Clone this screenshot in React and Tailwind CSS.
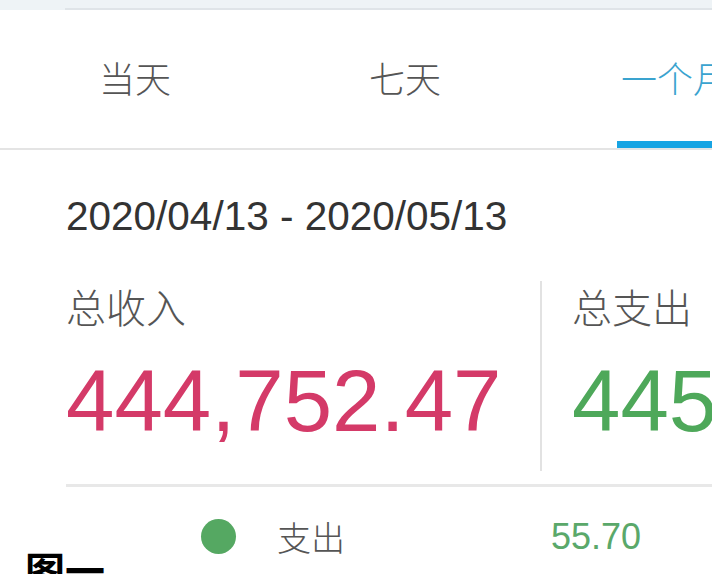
import React from "react";

const cjk = { fontFamily: '"Noto Sans CJK SC", "Noto Sans", sans-serif' };
const num = { fontFamily: '"Liberation Sans", Arial, sans-serif' };

export default function App() {
  return (
    <div className="relative w-[712px] h-[574px] overflow-hidden bg-white">
      {/* top strip */}
      <div className="h-[10px] bg-[#eef3f6] flex flex-col justify-end">
        <div className="ml-[65px] h-[2px] bg-[#dfe4e8]" />
      </div>

      {/* tabs */}
      <div className="flex h-[140px] border-b-2 border-[#e4e4e4]" style={cjk}>
        {["当天", "七天", "一个月"].map((t, i) => (
          <div key={t} className="w-[270px] shrink-0 flex flex-col items-center">
            <div className="flex-1 flex items-center justify-center pt-[2px]">
              <span
                className={
                  "text-[36px] leading-none font-light whitespace-nowrap " +
                  (i === 2 ? "text-[#3aa3cf]" : "text-[#555555]")
                }
              >
                {t}
              </span>
            </div>
            <div className={"h-[7px] w-[116px] " + (i === 2 ? "bg-[#17a4e3]" : "bg-transparent")} />
          </div>
        ))}
      </div>

      {/* content */}
      <div className="pl-[66px]">
        <div className="pt-[46px] text-[40.5px] leading-none text-[#333333]" style={num}>
          2020/04/13 - 2020/05/13
        </div>

        <div className="mt-[44px] flex h-[190px]">
          <div className="w-[474px] shrink-0 pt-[5px]">
            <div className="text-[40px] leading-none font-light text-[#555555]" style={cjk}>总收入</div>
            <div className="mt-[31px] text-[87px] leading-none text-[#d43a68] whitespace-nowrap" style={num}>
              444,752.47
            </div>
          </div>
          <div className="border-l-2 border-[#e2e2e2] pl-[30px] pt-[5px]">
            <div className="text-[40px] leading-none font-light text-[#555555] whitespace-nowrap" style={cjk}>总支出</div>
            <div className="mt-[31px] text-[87px] leading-none text-[#4ea85a] whitespace-nowrap" style={num}>
              445,808.17
            </div>
          </div>
        </div>

        <div className="mt-[13px] h-[3px] bg-[#e8e8e8]" />

        <div className="mt-[32px] flex items-center h-[36px]">
          <div className="ml-[135px] w-[35px] h-[35px] rounded-full bg-[#55a862] shrink-0" />
          <div className="ml-[41px] w-[274px] text-[34px] leading-none font-light text-[#555555]" style={cjk}>支出</div>
          <div className="text-[36px] leading-none text-[#5aa86a]" style={num}>55.70</div>
        </div>
      </div>

      {/* caption overlay */}
      <div
        className="absolute left-[25px] top-[549px] text-[40px] leading-none font-bold text-black bg-white"
        style={cjk}
      >
        图一
      </div>
    </div>
  );
}
